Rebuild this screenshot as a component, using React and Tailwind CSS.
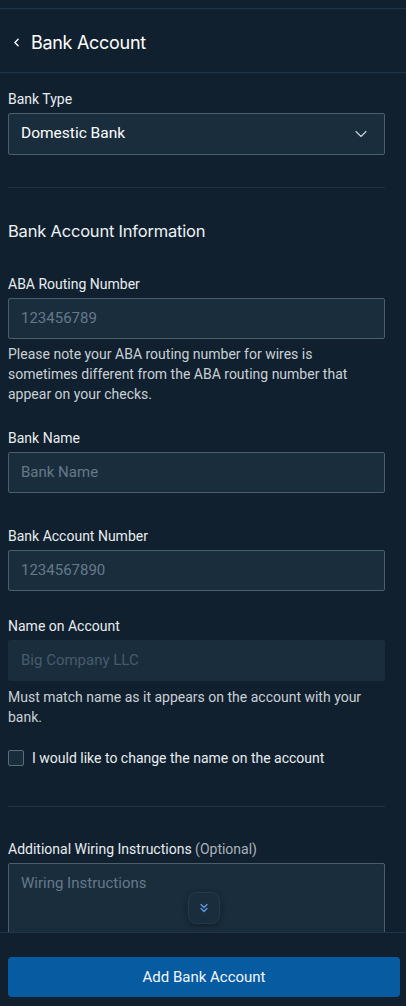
import React from "react";
import { ChevronLeft, ChevronDown, ChevronsDown } from "lucide-react";

const Label = ({ children, className = "" }) => (
    <div className={`text-[14px] leading-5 text-[#e8edf1] ${className}`}>{children}</div>
);

const Input = ({ placeholder, disabled }) => (
    <div
        className={`mt-1 h-[41px] flex items-center px-3 rounded-[2px] bg-[#1a2d3d] text-[15px] border ${
            disabled ? "border-[#1a2d3d] text-[#475b6b]" : "border-[#4a5e6e] text-[#65798a]"
        }`}
    >
        {placeholder}
    </div>
);

const Helper = ({ children, className = "" }) => (
    <p className={`text-[14px] leading-5 text-[#c9d0d6] ${className}`}>{children}</p>
);

const App = () => {
    return (
        <div className="h-[1006px] w-[406px] flex flex-col overflow-hidden bg-[#11202e] font-['Roboto',sans-serif]">
            {/* header */}
            <div className="mt-2 h-[65px] shrink-0 flex items-center gap-[8px] pl-[10px] pt-[3px] border-y border-[#1f3549]">
                <ChevronLeft className="w-[13px] h-[13px] text-white" strokeWidth={2.5} />
                <span className="text-[18px] text-white font-['Inter',sans-serif] tracking-[-0.3px]">Bank Account</span>
            </div>

            <div className="relative flex-1 min-h-0">
                <div className="h-full overflow-hidden pl-2 pr-[21px] pt-4">
                    <Label>Bank Type</Label>
                    <div className="mt-1 h-[42px] flex items-center justify-between pl-3 pr-[13px] rounded-[2px] bg-[#1a2d3d] border border-[#4a5e6e]">
                        <span className="text-[15.5px] text-white">Domestic Bank</span>
                        <ChevronDown className="w-[20px] h-[20px] text-[#c8d0d8]" strokeWidth={1.4} />
                    </div>

                    <div className="mt-8 h-px bg-[#203346]" />

                    <h2 className="mt-[31px] text-[16.5px] leading-6 text-[#eef2f5] font-['Inter',sans-serif] tracking-[-0.2px]">
                        Bank Account Information
                    </h2>

                    <Label className="mt-[31px]">ABA Routing Number</Label>
                    <Input placeholder="123456789" />
                    <Helper className="mt-[5px]">
                        Please note your ABA routing number for wires is sometimes different from the ABA routing number that appear on your checks.
                    </Helper>

                    <Label className="mt-6">Bank Name</Label>
                    <Input placeholder="Bank Name" />

                    <Label className="mt-[33px]">Bank Account Number</Label>
                    <Input placeholder="1234567890" />

                    <Label className="mt-[25px]">Name on Account</Label>
                    <Input placeholder="Big Company LLC" disabled />
                    <Helper className="mt-[6px]">Must match name as it appears on the account with your bank.</Helper>

                    <label className="mt-[21px] flex items-center gap-2 h-5">
                        <span className="w-4 h-4 rounded-[2px] border border-[#5a6d7d] bg-[#1a2d3d]" />
                        <span className="text-[14px] text-[#e8edf1]">I would like to change the name on the account</span>
                    </label>

                    <div className="mt-[38px] h-px bg-[#203346]" />

                    <Label className="mt-8">
                        Additional Wiring Instructions <span className="text-[#a8b3bd]">(Optional)</span>
                    </Label>
                    <div className="mt-1 h-[110px] px-3 pt-2 rounded-[2px] bg-[#1a2d3d] border border-[#4a5e6e] text-[15px] text-[#65798a]">
                        Wiring Instructions
                    </div>
                </div>

                {/* scroll hint */}
                <button className="absolute bottom-2 left-[188px] w-8 h-8 flex items-center justify-center rounded-lg bg-[#1a2d3d] border border-[#243a4d] shadow-[0_2px_6px_rgba(0,0,0,0.35)]">
                    <ChevronsDown className="w-[14px] h-[14px] text-[#5f93d8]" strokeWidth={2.5} />
                </button>
            </div>

            {/* footer */}
            <div className="h-[74px] shrink-0 border-t border-[#1f3549] pt-6 pl-2 pr-[6px]">
                <button className="w-full h-10 rounded-[4px] bg-[#075ba0] text-[#f2f6fa] text-[15px]">
                    Add Bank Account
                </button>
            </div>
        </div>
    );
};

export default App;
